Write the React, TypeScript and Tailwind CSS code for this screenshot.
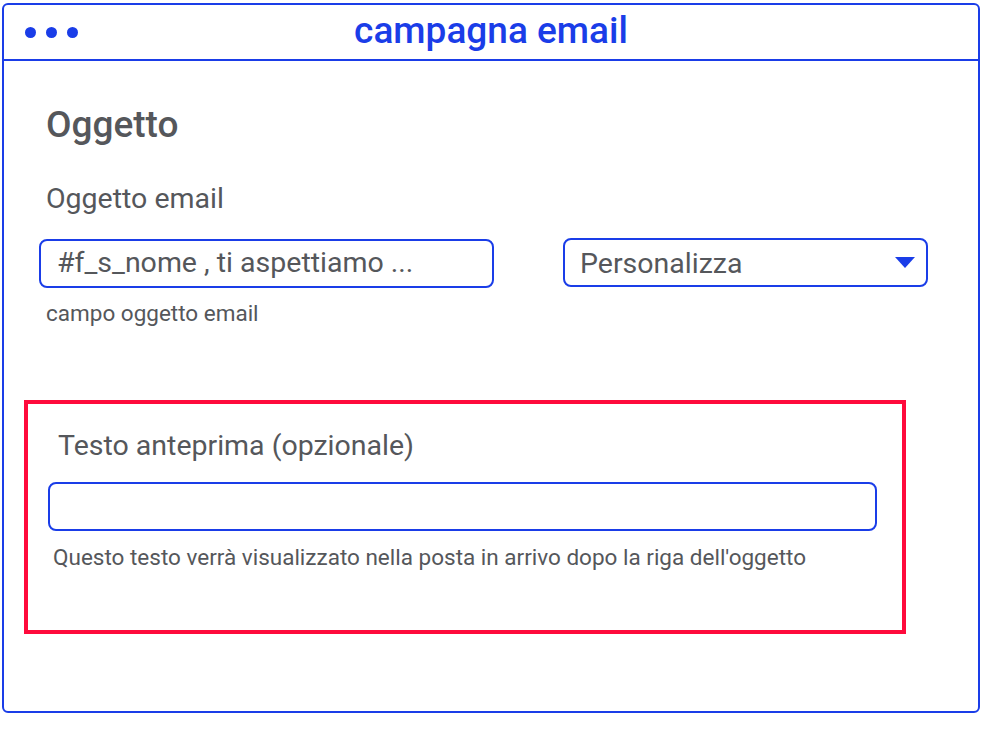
import React from 'react';

export default function App() {
  return (
    <div className="w-[981px] h-[736px] bg-white font-['Roboto',sans-serif] text-[#55575b]">
      <div className="ml-[2px] mt-[3px] w-[978px] h-[710px] border-2 border-[#1a3de8] rounded-[6px] flex flex-col">
        {/* Header */}
        <div className="relative h-[56px] shrink-0 border-b-2 border-[#1a3de8] flex items-center justify-center">
          <div className="absolute left-[21px] top-[22px] flex gap-[10px]">
            <span className="w-[11px] h-[11px] rounded-full bg-[#1a3de8]" />
            <span className="w-[11px] h-[11px] rounded-full bg-[#1a3de8]" />
            <span className="w-[11px] h-[11px] rounded-full bg-[#1a3de8]" />
          </div>
          <h1 className="text-[37px] font-medium text-[#1a3de8] leading-none -mt-[3px]">campagna email</h1>
        </div>

        {/* Oggetto */}
        <div className="pl-[42px] pt-[42px]">
          <h2 className="text-[37px] font-medium leading-[44px]">Oggetto</h2>
          <div className="mt-[35px] text-[28.5px] leading-[34px]">Oggetto email</div>

          <div className="mt-[23px] flex items-start -ml-[7px]">
            <div className="w-[455px] h-[49px] border-2 border-[#1a3de8] rounded-[8px] flex items-center pl-[16px] text-[28.5px]">
              #f_s_nome , ti aspettiamo ...
            </div>
            <div className="ml-[69px] -mt-[1px] w-[365px] h-[49px] border-2 border-[#1a3de8] rounded-[8px] flex items-center justify-between pl-[15px] pr-[11px] text-[28.5px]">
              <span className="pt-[4px]">Personalizza</span>
              <svg width="20" height="11" viewBox="0 0 20 11">
                <polygon points="0,0 20,0 10,11" fill="#1a3de8" />
              </svg>
            </div>
          </div>
          <div className="mt-[11px] text-[22.5px] leading-[28px]">campo oggetto email</div>
        </div>

        {/* Testo anteprima */}
        <div className="ml-[20px] mt-[73px] w-[882px] h-[234px] border-4 border-[#ff0a3c] pt-[25px] pl-[20px]">
          <div className="text-[28.5px] leading-[34px] pl-[10px]">Testo anteprima (opzionale)</div>
          <div className="mt-[19px] w-[829px] h-[49px] border-2 border-[#1a3de8] rounded-[8px]" />
          <div className="mt-[12px] text-[22.5px] leading-[28px] pl-[5px]">
            Questo testo verrà visualizzato nella posta in arrivo dopo la riga dell'oggetto
          </div>
        </div>
      </div>
    </div>
  );
}
